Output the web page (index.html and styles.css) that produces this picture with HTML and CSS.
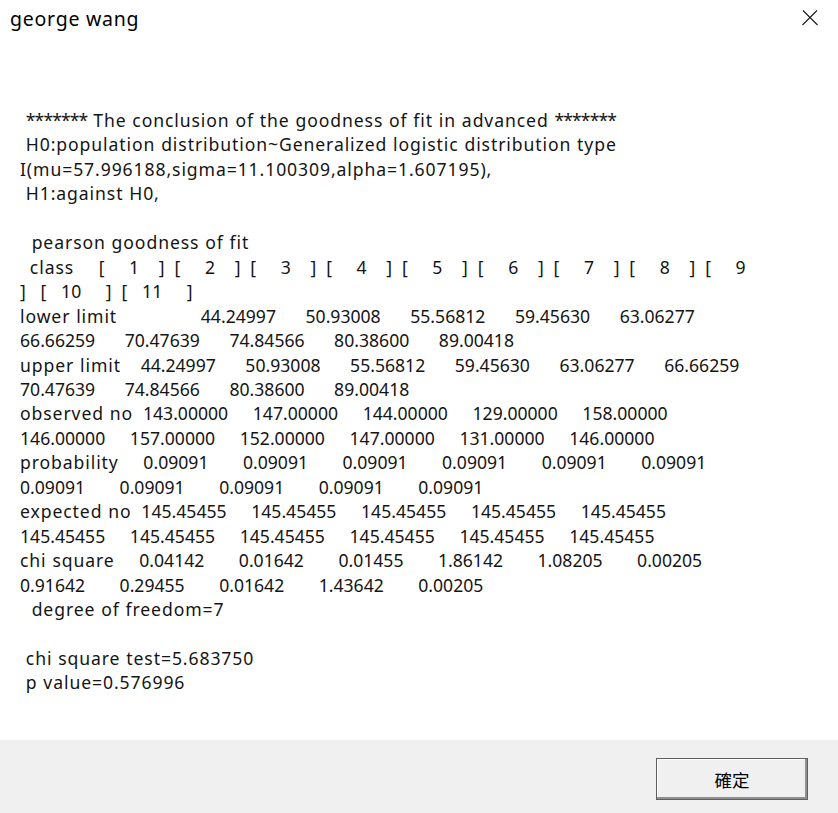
FILE: index.html
```html
<!DOCTYPE html>
<html lang="en">
<head>
<meta charset="utf-8">
<title>george wang</title>
<link rel="stylesheet" href="styles.css">
</head>
<body>
<div class="window">
  <div class="titlebar">
    <span class="title">george wang</span>
    <span class="close" aria-label="Close">
      <svg width="16" height="16" viewBox="0 0 16 16"><path d="M1 0.5 L15.5 15 M15 0.5 L0.5 15" stroke="#1a1a1a" stroke-width="1.1" fill="none"/></svg>
    </span>
  </div>
  <div class="content">
    <div class="msg">
      <div class="ln t"> <span class="ast">*******</span> The conclusion of the goodness of fit in advanced <span class="ast">*******</span></div>
      <div class="ln t"> H0:population distribution~Generalized logistic distribution type</div>
      <div class="ln t">I(mu=57.996188,sigma=11.100309,alpha=1.607195),</div>
      <div class="ln t"> H1:against H0,</div>
      <div class="ln"></div>
      <div class="ln t">  pearson goodness of fit</div>
      <div class="ln">  <span class="t">class</span>     [     1    ]  [     2    ]  [     3    ]  [     4    ]  [     5    ]  [     6    ]  [     7    ]  [     8    ]  [     9</div>
      <div class="ln">]   [   10     ]  [   11     ]</div>
      <div class="ln"><span class="t">lower limit</span>                 44.24997      50.93008      55.56812      59.45630      63.06277</div>
      <div class="ln">66.66259      70.47639      74.84566      80.38600      89.00418</div>
      <div class="ln"><span class="t">upper limit</span>    44.24997      50.93008      55.56812      59.45630      63.06277      66.66259</div>
      <div class="ln">70.47639      74.84566      80.38600      89.00418</div>
      <div class="ln"><span class="t">observed no</span>  143.00000     147.00000     144.00000     129.00000     158.00000</div>
      <div class="ln">146.00000     157.00000     152.00000     147.00000     131.00000     146.00000</div>
      <div class="ln"><span class="t">probability</span>     0.09091       0.09091       0.09091       0.09091       0.09091       0.09091</div>
      <div class="ln">0.09091       0.09091       0.09091       0.09091       0.09091</div>
      <div class="ln"><span class="t">expected no</span>  145.45455     145.45455     145.45455     145.45455     145.45455</div>
      <div class="ln">145.45455     145.45455     145.45455     145.45455     145.45455     145.45455</div>
      <div class="ln"><span class="t">chi square</span>     0.04142       0.01642       0.01455       1.86142       1.08205       0.00205</div>
      <div class="ln">0.91642       0.29455       0.01642       1.43642       0.00205</div>
      <div class="ln t">  degree of freedom=7</div>
      <div class="ln"></div>
      <div class="ln t"> chi square test=5.683750</div>
      <div class="ln t"> p value=0.576996</div>
    </div>
  </div>
  <div class="footer">
    <button class="ok" type="button">確定</button>
  </div>
</div>
</body>
</html>
```

FILE: styles.css
```css
html, body {
  margin: 0;
  padding: 0;
  background: #ffffff;
}

.window {
  width: 838px;
  height: 813px;
  display: flex;
  flex-direction: column;
  background: #ffffff;
  color: #141414;
  font-family: "Noto Sans", "Open Sans", sans-serif;
  overflow: hidden;
}

.titlebar {
  height: 36px;
  display: flex;
  align-items: center;
  justify-content: space-between;
  padding: 0 20px 0 10px;
}

.title {
  font-size: 19.5px;
  letter-spacing: 0.75px;
  color: #000;
}

.close {
  display: flex;
  width: 16px;
  height: 16px;
  margin-top: -1px;
}

.content {
  flex: 1;
  padding-top: 72px;
}

.msg {
  padding-left: 20px;
  font-size: 17.6px;
  line-height: 24.45px;
  word-spacing: 0.35px;
}

.ln {
  white-space: pre;
  min-height: 24.45px;
}

.t {
  letter-spacing: 0.9px;
}

.t .ast {
  letter-spacing: -0.9px;
}

.footer {
  height: 73px;
  background: #f0f0f0;
  display: flex;
  justify-content: flex-end;
  align-items: flex-start;
  padding: 18px 30px 0 0;
  box-sizing: border-box;
}

.ok {
  width: 152px;
  height: 42px;
  margin: 0;
  padding: 0;
  background: #f0f0f0;
  border: 1px solid #5f5f5f;
  box-shadow: inset -2px -2px 0 #8f8f8f, inset 1px 1px 0 #ffffff;
  font-family: "Noto Sans CJK TC", "Noto Sans CJK SC", sans-serif;
  font-size: 17.5px;
  color: #000;
}
```
